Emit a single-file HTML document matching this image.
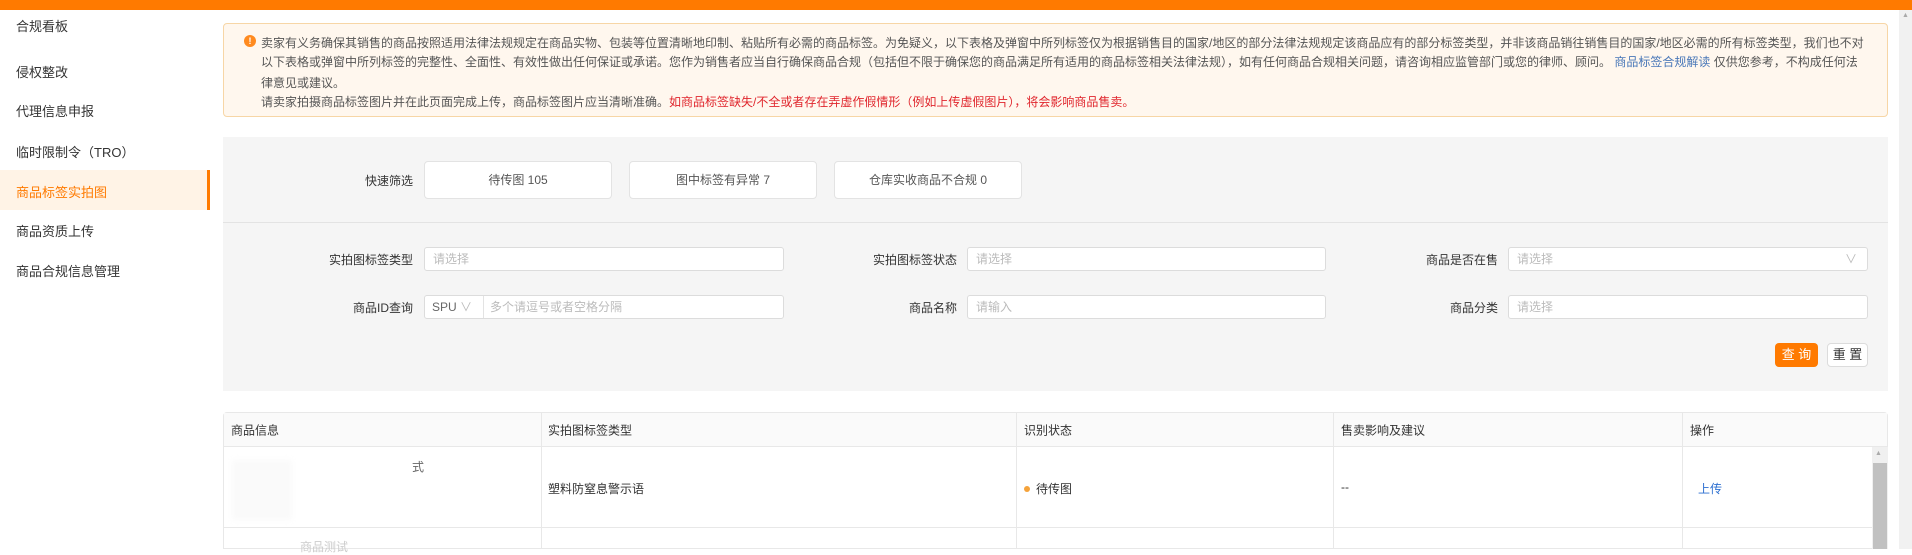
<!DOCTYPE html>
<html><head><meta charset="utf-8"><style>
*{margin:0;padding:0;box-sizing:border-box}
body{width:1912px;height:549px;overflow:hidden;background:#fff;font-family:"Liberation Sans","Noto Sans CJK SC",sans-serif;font-size:12px;color:#333;position:relative}
.abs{position:absolute}
.top{left:0;top:0;width:1912px;height:10px;background:#ff7a00}
.side div{position:absolute;left:16px;font-size:13px;color:#333;white-space:nowrap}
.act{left:0;top:170px;width:210px;height:40px;background:#fff3e6;border-right:3px solid #ff7a00}
.notice{left:223px;top:23px;width:1665px;height:94px;background:#fff7ee;border:1px solid #f7d6a6;border-radius:4px}
.nl{position:absolute;left:37px;white-space:nowrap;font-size:12px;color:#555}
.ic{left:244px;top:35px;width:12px;height:12px;border-radius:50%;background:#ff8a1f;color:#fff;font-size:9px;font-weight:bold;text-align:center;line-height:12px}
.panel{left:223px;top:137px;width:1665px;height:254px;background:#f5f5f5}
.qb{position:absolute;top:161px;height:38px;background:#fff;border:1px solid #e3e3e3;border-radius:4px;text-align:center;line-height:36px;color:#555}
.lab{position:absolute;text-align:right;white-space:nowrap;color:#333;font-size:12px}
.inp{position:absolute;height:24px;background:#fff;border:1px solid #dcdcdc;border-radius:3px;color:#bbb;line-height:22px;padding-left:8px}
.th{position:absolute;top:430px;color:#333;transform:translateY(-50%)}
.vl{position:absolute;width:1px;background:#e8e8e8}
</style></head><body>
<div class="abs top"></div>
<div class="abs act"></div>
<div class="side">
<div style="top:16px">合规看板</div>
<div style="top:62px">侵权整改</div>
<div style="top:101px">代理信息申报</div>
<div style="top:142px">临时限制令（TRO）</div>
<div style="top:182px;color:#ff7a00">商品标签实拍图</div>
<div style="top:221px">商品资质上传</div>
<div style="top:261px">商品合规信息管理</div>
</div>
<div class="abs notice">
<div class="nl" style="top:10px">卖家有义务确保其销售的商品按照适用法律法规规定在商品实物、包装等位置清晰地印制、粘贴所有必需的商品标签。为免疑义，以下表格及弹窗中所列标签仅为根据销售目的国家/地区的部分法律法规规定该商品应有的部分标签类型，并非该商品销往销售目的国家/地区必需的所有标签类型，我们也不对</div>
<div class="nl" style="top:29px">以下表格或弹窗中所列标签的完整性、全面性、有效性做出任何保证或承诺。您作为销售者应当自行确保商品合规（包括但不限于确保您的商品满足所有适用的商品标签相关法律法规），如有任何商品合规相关问题，请咨询相应监管部门或您的律师、顾问。 <span style="color:#4a78b8">商品标签合规解读</span> 仅供您参考，不构成任何法</div>
<div class="nl" style="top:50px">律意见或建议。</div>
<div class="nl" style="top:69px">请卖家拍摄商品标签图片并在此页面完成上传，商品标签图片应当清晰准确。<span style="color:#e0262d">如商品标签缺失/不全或者存在弄虚作假情形（例如上传虚假图片），将会影响商品售卖。</span></div>
</div>
<div class="abs ic">!</div>
<div class="abs panel"></div>
<div class="abs" style="left:223px;top:222px;width:1665px;height:1px;background:#e3e3e3"></div>
<div class="lab" style="left:300px;width:113px;top:172px">快速筛选</div>
<div class="qb" style="left:424px;width:188px">待传图 105</div>
<div class="qb" style="left:629px;width:188px">图中标签有异常 7</div>
<div class="qb" style="left:834px;width:188px">仓库实收商品不合规 0</div>
<div class="lab" style="left:300px;width:113px;top:251px">实拍图标签类型</div>
<div class="inp" style="left:424px;top:247px;width:360px">请选择</div>
<div class="lab" style="left:850px;width:107px;top:251px">实拍图标签状态</div>
<div class="inp" style="left:967px;top:247px;width:359px">请选择</div>
<div class="lab" style="left:1400px;width:98px;top:251px">商品是否在售</div>
<div class="inp" style="left:1508px;top:247px;width:360px">请选择<span style="position:absolute;right:10px;color:#bbb">∨</span></div>
<div class="lab" style="left:300px;width:113px;top:299px">商品ID查询</div>
<div class="inp" style="left:424px;top:295px;width:360px;padding-left:0"><span style="display:inline-block;width:59px;border-right:1px solid #e3e3e3;padding-left:7px;color:#666">SPU <span style="color:#bbb">∨</span></span><span style="padding-left:6px">多个请逗号或者空格分隔</span></div>
<div class="lab" style="left:850px;width:107px;top:299px">商品名称</div>
<div class="inp" style="left:967px;top:295px;width:359px">请输入</div>
<div class="lab" style="left:1400px;width:98px;top:299px">商品分类</div>
<div class="inp" style="left:1508px;top:295px;width:360px">请选择</div>
<div class="abs" style="left:1775px;top:343px;width:43px;height:24px;background:#ff7a00;border-radius:4px;color:#fff;text-align:center;line-height:24px;font-size:13px">查 询</div>
<div class="abs" style="left:1827px;top:343px;width:41px;height:24px;background:#fff;border:1px solid #dcdcdc;border-radius:4px;text-align:center;line-height:22px;font-size:13px">重 置</div>
<div class="abs" style="left:223px;top:412px;width:1665px;height:137px;border:1px solid #e8e8e8;border-radius:4px 4px 0 0"></div>
<div class="abs" style="left:224px;top:413px;width:1663px;height:34px;background:#fafafa;border-bottom:1px solid #e8e8e8"></div>
<div class="abs" style="left:224px;top:527px;width:1648px;height:1px;background:#e8e8e8"></div>
<div class="vl" style="left:541px;top:413px;height:136px"></div>
<div class="vl" style="left:1016px;top:413px;height:136px"></div>
<div class="vl" style="left:1333px;top:413px;height:136px"></div>
<div class="vl" style="left:1682px;top:413px;height:136px"></div>
<div class="th" style="left:231px">商品信息</div>
<div class="th" style="left:548px">实拍图标签类型</div>
<div class="th" style="left:1024px">识别状态</div>
<div class="th" style="left:1341px">售卖影响及建议</div>
<div class="th" style="left:1690px">操作</div>
<div class="abs" style="left:232px;top:460px;width:60px;height:60px;background:#fafafa;filter:blur(3px)"></div>
<div class="abs" style="left:412px;top:458px;color:#666">式</div>
<div class="abs" style="left:548px;top:480px">塑料防窒息警示语</div>
<div class="abs" style="left:1024px;top:486px;width:6px;height:6px;border-radius:50%;background:#f5a33b"></div>
<div class="abs" style="left:1036px;top:480px">待传图</div>
<div class="abs" style="left:1341px;top:480px">--</div>
<div class="abs" style="left:1698px;top:480px;color:#2c6fd0">上传</div>
<div class="abs" style="left:300px;top:538px;color:#ccc">商品测试</div>
<div class="abs" style="left:1872px;top:447px;width:16px;height:102px;background:#f0f0f0"></div>
<div class="abs" style="left:1873px;top:463px;width:14px;height:86px;background:#c1c1c1"></div>
<div class="abs" style="left:1875px;top:450px;color:#aaa;font-size:7px">▲</div>
<div class="abs" style="left:1899px;top:10px;width:13px;height:539px;background:#f1f1f1"></div>
<div class="abs" style="left:1902px;top:12px;color:#aaa;font-size:7px">▲</div>
</body></html>
